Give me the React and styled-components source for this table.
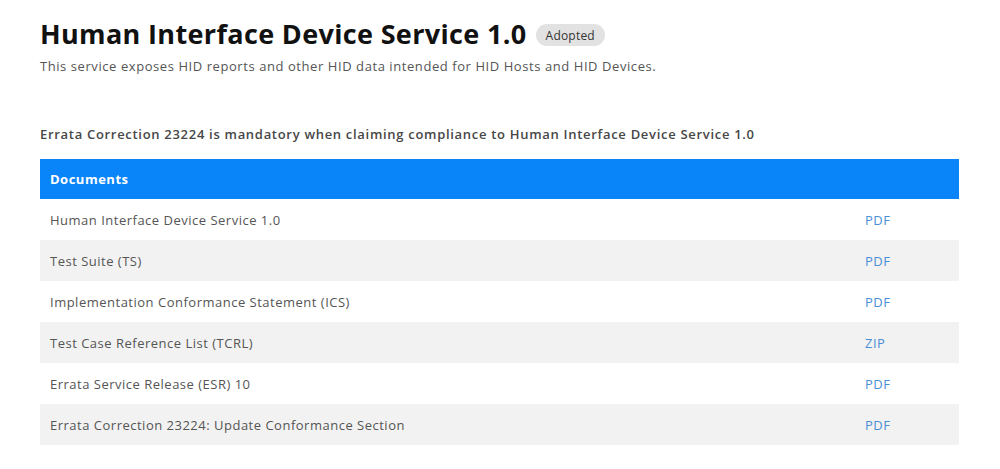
import React from "react";
import styled, { createGlobalStyle } from "styled-components";

const Global = createGlobalStyle`
  html, body { margin: 0; padding: 0; background: #fff; }
  body { font-family: "Open Sans", "Liberation Sans", sans-serif; }
`;

const Page = styled.div`
  padding: 16px 41px 0 40px;
`;

const TitleRow = styled.div`
  display: flex;
  align-items: center;
  gap: 9px;
`;

const Title = styled.h1`
  margin: 0;
  font-size: 27px;
  font-weight: 700;
  color: #111;
  line-height: 36px;
  letter-spacing: 0.35px;
`;

const Badge = styled.span`
  display: inline-flex;
  align-items: center;
  height: 22px;
  padding: 0 10px;
  border-radius: 11px;
  background: #e2e2e2;
  color: #333;
  font-size: 12px;
  letter-spacing: 0.2px;
  margin-top: 2px;
`;

const Subtitle = styled.p`
  margin: 4px 0 0;
  font-size: 13px;
  color: #555;
  line-height: 20px;
  letter-spacing: 0.57px;
`;

const Notice = styled.p`
  margin: 48px 0 0;
  font-size: 13px;
  font-weight: 600;
  color: #474747;
  line-height: 20px;
  letter-spacing: 0.7px;
`;

const Table = styled.div`
  margin-top: 15px;
  display: flex;
  flex-direction: column;
`;

const Header = styled.div`
  height: 40px;
  display: flex;
  align-items: center;
  padding: 0 10px;
  background: #0a84f9;
  color: #fff;
  font-size: 13px;
  font-weight: 700;
  letter-spacing: 0.5px;
`;

const Row = styled.div`
  height: 41px;
  display: grid;
  grid-template-columns: 1fr 94px;
  align-items: center;
  padding-left: 10px;
  background: ${(p) => (p.$alt ? "#f2f2f2" : "#fff")};
  font-size: 13px;
  letter-spacing: 0.5px;
`;

const Name = styled.span`
  color: #555;
`;

const Link = styled.a`
  color: #4a8fd6;
  text-decoration: none;
`;

const docs = [
  ["Human Interface Device Service 1.0", "PDF"],
  ["Test Suite (TS)", "PDF"],
  ["Implementation Conformance Statement (ICS)", "PDF"],
  ["Test Case Reference List (TCRL)", "ZIP"],
  ["Errata Service Release (ESR) 10", "PDF"],
  ["Errata Correction 23224: Update Conformance Section", "PDF"],
];

export default function App() {
  return (
    <>
      <Global />
      <Page>
        <TitleRow>
          <Title>Human Interface Device Service 1.0</Title>
          <Badge>Adopted</Badge>
        </TitleRow>
        <Subtitle>
          This service exposes HID reports and other HID data intended for HID Hosts and HID Devices.
        </Subtitle>
        <Notice>
          Errata Correction 23224 is mandatory when claiming compliance to Human Interface Device Service 1.0
        </Notice>
        <Table>
          <Header>Documents</Header>
          {docs.map(([name, type], i) => (
            <Row key={name} $alt={i % 2 === 1}>
              <Name>{name}</Name>
              <Link href="#">{type}</Link>
            </Row>
          ))}
        </Table>
      </Page>
    </>
  );
}
